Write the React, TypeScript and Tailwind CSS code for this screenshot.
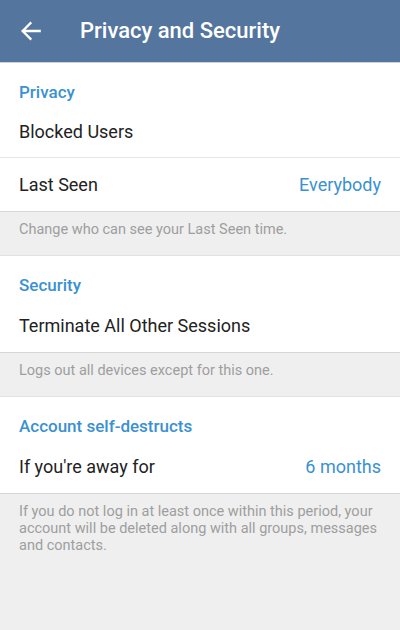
import React from "react";

const font = { fontFamily: "Roboto, 'Noto Sans', sans-serif" };

function SectionHeader({ children }: { children: React.ReactNode }) {
  return (
    <div className="h-[43px] pt-[19px] pl-[19px] text-[17px] leading-[20px] font-medium text-[#3a91d2]">
      {children}
    </div>
  );
}

function Row({
  label,
  value,
  h,
}: {
  label: string;
  value?: string;
  h: string;
}) {
  return (
    <div className={`flex items-center justify-between px-[19px] ${h}`}>
      <span className="text-[18px] text-[#222222]">{label}</span>
      {value && <span className="text-[18px] text-[#3a91d2]">{value}</span>}
    </div>
  );
}

function Note({ children, h }: { children: React.ReactNode; h: string }) {
  return (
    <div
      className={`bg-[#efefef] border-t border-[#d6d6d6] px-[19px] pt-[9px] text-[14.5px] leading-[17px] text-[#9e9e9e] ${h}`}
    >
      {children}
    </div>
  );
}

export default function App() {
  return (
    <div className="w-[400px] h-[630px] bg-[#efefef] flex flex-col" style={font}>
      <div className="h-[62px] bg-[#54759e] flex items-center shrink-0">
        <div className="w-[80px] flex items-center pl-[18px]">
          <svg width="26" height="26" viewBox="0 0 24 24" fill="none">
            <path
              d="M20 12H4.5M11.5 4.8L4.3 12l7.2 7.2"
              stroke="white"
              strokeWidth="2.1"
              strokeLinecap="square"
            />
          </svg>
        </div>
        <span className="text-[22px] font-medium text-white leading-none">
          Privacy and Security
        </span>
      </div>
      <div className="h-px bg-[#cfd3d8] shrink-0" />

      <div className="bg-white">
        <SectionHeader>Privacy</SectionHeader>
        <Row label="Blocked Users" h="h-[51px]" />
        <div className="h-px bg-[#e6e6e6]" />
        <Row label="Last Seen" value="Everybody" h="h-[53px]" />
      </div>
      <Note h="h-[44px]">Change who can see your Last Seen time.</Note>
      <div className="h-px bg-[#e2e2e2]" />

      <div className="bg-white">
        <SectionHeader>Security</SectionHeader>
        <Row label="Terminate All Other Sessions" h="h-[53px]" />
      </div>
      <Note h="h-[44px]">Logs out all devices except for this one.</Note>
      <div className="h-px bg-[#e2e2e2]" />

      <div className="bg-white">
        <SectionHeader>Account self-destructs</SectionHeader>
        <Row label="If you're away for" value="6 months" h="h-[53px]" />
      </div>
      <Note h="flex-1">
        If you do not log in at least once within this period, your account
        will be deleted along with all groups, messages and contacts.
      </Note>
    </div>
  );
}
